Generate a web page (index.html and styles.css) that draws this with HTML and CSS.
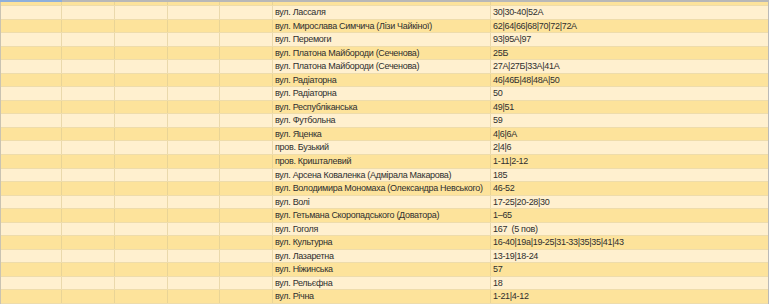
FILE: index.html
```html
<!DOCTYPE html>
<html lang="uk">
<head>
<meta charset="utf-8">
<title>Sheet</title>
<link rel="stylesheet" href="styles.css">
</head>
<body>
<div class="sheet">
  <div class="topbar"><div class="topbar-sel"></div></div>
  <div class="rows">
    <div class="row dark partial"><div class="c"></div><div class="c"></div><div class="c"></div><div class="c"></div><div class="c"></div><div class="c"></div><div class="c"></div></div>
    <div class="row light"><div class="c"></div><div class="c"></div><div class="c"></div><div class="c"></div><div class="c"></div><div class="c t">вул. Лассаля</div><div class="c t">30|30-40|52А</div></div>
    <div class="row dark"><div class="c"></div><div class="c"></div><div class="c"></div><div class="c"></div><div class="c"></div><div class="c t">вул. Мирослава Симчича (Лізи Чайкіної)</div><div class="c t">62|64|66|68|70|72|72А</div></div>
    <div class="row light"><div class="c"></div><div class="c"></div><div class="c"></div><div class="c"></div><div class="c"></div><div class="c t">вул. Перемоги</div><div class="c t">93|95А|97</div></div>
    <div class="row dark"><div class="c"></div><div class="c"></div><div class="c"></div><div class="c"></div><div class="c"></div><div class="c t">вул. Платона Майбороди (Сеченова)</div><div class="c t">25Б</div></div>
    <div class="row light"><div class="c"></div><div class="c"></div><div class="c"></div><div class="c"></div><div class="c"></div><div class="c t">вул. Платона Майбороди (Сеченова)</div><div class="c t">27А|27Б|33А|41А</div></div>
    <div class="row dark"><div class="c"></div><div class="c"></div><div class="c"></div><div class="c"></div><div class="c"></div><div class="c t">вул. Радіаторна</div><div class="c t">46|46Б|48|48А|50</div></div>
    <div class="row light"><div class="c"></div><div class="c"></div><div class="c"></div><div class="c"></div><div class="c"></div><div class="c t">вул. Радіаторна</div><div class="c t">50</div></div>
    <div class="row dark"><div class="c"></div><div class="c"></div><div class="c"></div><div class="c"></div><div class="c"></div><div class="c t">вул. Республіканська</div><div class="c t">49|51</div></div>
    <div class="row light"><div class="c"></div><div class="c"></div><div class="c"></div><div class="c"></div><div class="c"></div><div class="c t">вул. Футбольна</div><div class="c t">59</div></div>
    <div class="row dark"><div class="c"></div><div class="c"></div><div class="c"></div><div class="c"></div><div class="c"></div><div class="c t">вул. Яценка</div><div class="c t">4|6|6А</div></div>
    <div class="row light"><div class="c"></div><div class="c"></div><div class="c"></div><div class="c"></div><div class="c"></div><div class="c t">пров. Бузький</div><div class="c t">2|4|6</div></div>
    <div class="row dark"><div class="c"></div><div class="c"></div><div class="c"></div><div class="c"></div><div class="c"></div><div class="c t">пров. Кришталевий</div><div class="c t">1-11|2-12</div></div>
    <div class="row light"><div class="c"></div><div class="c"></div><div class="c"></div><div class="c"></div><div class="c"></div><div class="c t">вул. Арсена Коваленка (Адмірала Макарова)</div><div class="c t">185</div></div>
    <div class="row dark"><div class="c"></div><div class="c"></div><div class="c"></div><div class="c"></div><div class="c"></div><div class="c t">вул. Володимира Мономаха (Олександра Невського)</div><div class="c t">46-52</div></div>
    <div class="row light"><div class="c"></div><div class="c"></div><div class="c"></div><div class="c"></div><div class="c"></div><div class="c t">вул. Волі</div><div class="c t">17-25|20-28|30</div></div>
    <div class="row dark"><div class="c"></div><div class="c"></div><div class="c"></div><div class="c"></div><div class="c"></div><div class="c t">вул. Гетьмана Скоропадського (Доватора)</div><div class="c t">1–65</div></div>
    <div class="row light"><div class="c"></div><div class="c"></div><div class="c"></div><div class="c"></div><div class="c"></div><div class="c t">вул. Гоголя</div><div class="c t">167&nbsp;&nbsp;(5 пов)</div></div>
    <div class="row dark"><div class="c"></div><div class="c"></div><div class="c"></div><div class="c"></div><div class="c"></div><div class="c t">вул. Культурна</div><div class="c t">16-40|19а|19-25|31-33|35|35|41|43</div></div>
    <div class="row light"><div class="c"></div><div class="c"></div><div class="c"></div><div class="c"></div><div class="c"></div><div class="c t">вул. Лазаретна</div><div class="c t">13-19|18-24</div></div>
    <div class="row dark"><div class="c"></div><div class="c"></div><div class="c"></div><div class="c"></div><div class="c"></div><div class="c t">вул. Ніжинська</div><div class="c t">57</div></div>
    <div class="row light"><div class="c"></div><div class="c"></div><div class="c"></div><div class="c"></div><div class="c"></div><div class="c t">вул. Рельєфна</div><div class="c t">18</div></div>
    <div class="row dark"><div class="c"></div><div class="c"></div><div class="c"></div><div class="c"></div><div class="c"></div><div class="c t">вул. Річна</div><div class="c t">1-21|4-12</div></div>
  </div>
</div>
</body>
</html>
```

FILE: styles.css
```css
html, body {
  margin: 0;
  padding: 0;
  background: #ffffff;
}
.sheet {
  width: 769px;
  font-family: "Liberation Sans", Arial, sans-serif;
  font-size: 9px;
  letter-spacing: -0.3px;
  color: #2e2e2e;
}
.topbar {
  height: 2px;
  background: #b8b8b8;
  width: 769px;
}
.topbar-sel {
  width: 62px;
  height: 2px;
  background: #8eb0dc;
}
.rows {
  border-left: 1px solid #c9c3b2;
  border-right: 1px solid #b9b9b9;
  width: 767px;
}
.row {
  display: grid;
  grid-template-columns: 61px 53px 53px 52px 53px 218px 277px;
  height: 13.55px;
  box-sizing: border-box;
  border-bottom: 1px solid #eedcab;
}
.row.partial {
  height: 4px;
}
.light { background: #fff0cf; }
.dark { background: #fde39b; }
.c {
  border-right: 1px solid #ead9ac;
  box-sizing: border-box;
  overflow: hidden;
  white-space: nowrap;
}
.dark .c { border-right-color: #e9d496; }
.c:last-child { border-right: none; }
.t {
  padding-left: 2px;
  line-height: 13px;
}
```
